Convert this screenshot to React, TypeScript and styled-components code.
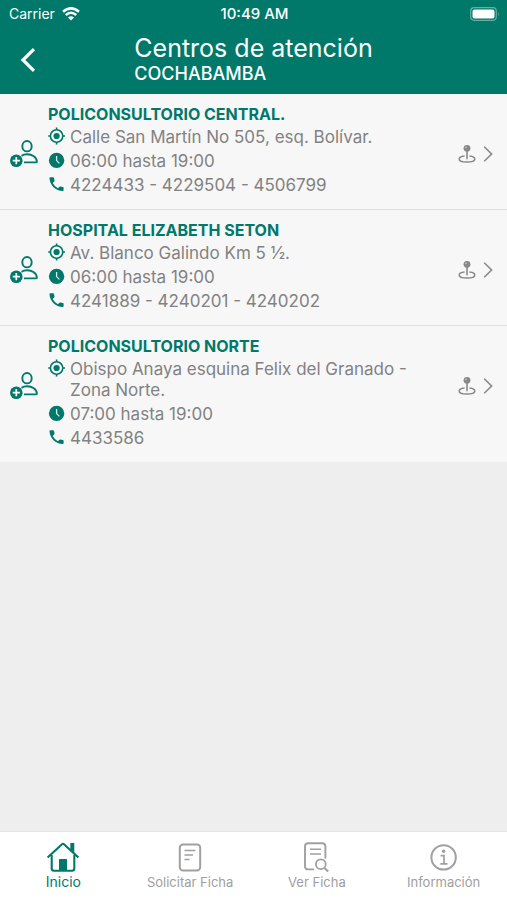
import React from "react";
import styled, { createGlobalStyle } from "styled-components";

const green = "#00796b";

const GlobalStyle = createGlobalStyle`
  * { box-sizing: border-box; }
  body { margin: 0; background: #eeeeee; font-family: Inter, "Liberation Sans", sans-serif; }
  button { font: inherit; border: 0; padding: 0; background: none; cursor: pointer; }
  h1, h2, p, ul { margin: 0; padding: 0; }
  svg { display: block; flex: none; }
`;

const Screen = styled.div`
  min-height: 100vh;
  display: flex;
  flex-direction: column;
`;

const TopArea = styled.header`
  background: ${green};
  color: #fff;
`;

const StatusBar = styled.div`
  display: grid;
  grid-template-columns: 1fr auto 1fr;
  align-items: center;
  height: 28px;
  padding: 0 7px 0 9px;
  font-size: 14px;
  line-height: 18px;
`;

const Carrier = styled.span`
  display: flex;
  align-items: center;
  gap: 7px;
`;

const Time = styled.time`
  font-size: 15px;
  font-weight: 500;
`;

const Battery = styled.span`
  justify-self: end;
`;

const NavBar = styled.div`
  display: grid;
  grid-template-columns: 1fr auto 1fr;
  align-items: center;
  height: 66px;
  padding-bottom: 2px;
`;

const BackButton = styled.button`
  display: flex;
  align-items: center;
  width: 56px;
  height: 48px;
  padding-left: 20px;
  color: #fff;
`;

const Title = styled.h1`
  font-size: 25px;
  line-height: 28px;
  font-weight: 400;
`;

const City = styled.p`
  font-size: 18px;
  line-height: 24px;
  font-weight: 500;
`;

const Centers = styled.ul`
  flex: 1;
  list-style: none;
`;

const CenterRow = styled.li`
  display: flex;
  align-items: flex-start;
  padding: 11px 14px 13px 10px;
  background: #f7f7f7;
  border-bottom: 1px solid #e0e0e0;
  &:last-child { border-bottom: 0; }
`;

const AddButton = styled.button`
  width: 38px;
  margin-top: 35px;
  color: ${green};
`;

const Details = styled.div`
  flex: 1;
  display: flex;
  flex-direction: column;
  gap: 3px;
  padding-right: 36px;
`;

const CenterName = styled.h2`
  font-size: 16px;
  line-height: 19px;
  font-weight: 700;
  color: ${green};
`;

const DetailLine = styled.p`
  display: flex;
  align-items: flex-start;
  gap: 4px;
  font-size: 17px;
  line-height: 21px;
  color: #828282;
  svg { color: ${green}; }
`;

const MapButton = styled.button`
  display: flex;
  align-items: center;
  gap: 7px;
  margin-top: 39px;
  color: #888;
`;

const TabBar = styled.nav`
  display: grid;
  grid-template-columns: repeat(4, 1fr);
  position: sticky;
  bottom: 0;
  height: 69px;
  background: #fff;
  border-top: 1px solid #e4e4e4;
`;

const Tab = styled.button<{ $active?: boolean }>`
  display: flex;
  flex-direction: column;
  align-items: center;
  padding-top: 9px;
  gap: 1px;
  color: ${(p) => (p.$active ? green : "#a0a0a0")};
`;

const TabLabel = styled.span<{ $active?: boolean }>`
  font-size: ${(p) => (p.$active ? 14 : 13)}px;
  line-height: 16px;
`;

const WifiIcon = () => (
  <svg width="18" height="14" viewBox="0 0 18 14" fill="none" stroke="currentColor" strokeWidth="2.5" aria-label="Wi-Fi">
    <path d="M1 4.8 Q9 -2 17 4.8" />
    <path d="M3.8 8 Q9 3.6 14.2 8" />
    <path d="M9 13.5 L6 10.4 Q9 8.2 12 10.4 Z" fill="currentColor" stroke="none" />
  </svg>
);

const BatteryIcon = () => (
  <svg width="30" height="14" viewBox="0 0 30 14" aria-label="Batería">
    <rect x=".7" y=".7" width="25.6" height="12.6" rx="3.5" fill="none" stroke="#fff" strokeOpacity=".4" strokeWidth="1.2" />
    <rect x="2.5" y="2.5" width="22" height="9" rx="2" fill="#fff" />
    <path d="M28 5 Q29.6 7 28 9 Z" fill="#fff" fillOpacity=".45" />
  </svg>
);

const BackIcon = () => (
  <svg width="16" height="24" viewBox="0 0 16 24" fill="none" stroke="currentColor" strokeWidth="3.2">
    <path d="M14 1.2 L3 12 L14 22.8" />
  </svg>
);

const AddPersonIcon = () => (
  <svg width="28" height="28" viewBox="0 0 28 28" fill="none" stroke="currentColor" strokeWidth="1.9">
    <ellipse cx="17" cy="6.2" rx="4.7" ry="5.2" />
    <path d="M11.5 15.7 C14.2 14 20 13.6 23.4 16 C25.6 17.5 26.8 19.7 26.9 21.4 Q26.9 22.4 25.8 22.4 H14" />
    <circle cx="6.3" cy="20.7" r="6.3" fill="currentColor" stroke="none" />
    <path d="M6.3 17.1 V24.3 M2.7 20.7 H9.9" stroke="#fff" strokeWidth="1.7" />
  </svg>
);

const TargetIcon = () => (
  <svg width="18" height="18" viewBox="0 0 18 18" fill="none" stroke="currentColor" strokeWidth="1.6">
    <circle cx="8.6" cy="9" r="6.2" />
    <circle cx="8.6" cy="9" r="3.1" fill="currentColor" stroke="none" />
    <path d="M8.6 .6 V3 M8.6 15 V17.4 M.2 9 H2.6 M14.6 9 H17" />
  </svg>
);

const ClockIcon = () => (
  <svg width="18" height="18" viewBox="0 0 18 18" fill="none">
    <circle cx="8.6" cy="9.4" r="7.7" fill="currentColor" />
    <path d="M8.6 5 V9.6 L11.4 12.4" stroke="#d9eeeb" strokeWidth="1.3" />
  </svg>
);

const PhoneIcon = () => (
  <svg width="18" height="18" viewBox="0 0 18 18" fill="currentColor">
    <path d="M2.4 2.2 H5.1 Q5.9 2.2 6 3 L6.5 5.6 Q6.6 6.1 6.2 6.5 L4.7 8.1 Q6.5 11.5 9.9 13.3 L11.5 11.7 Q11.9 11.3 12.4 11.4 L14.8 11.9 Q15.6 12.1 15.6 12.8 V15.3 Q15.6 16.1 14.8 16.1 C7.5 15.9 1.8 10.3 1.5 3 Q1.5 2.2 2.4 2.2 Z" />
  </svg>
);

const PinIcon = () => (
  <svg width="18" height="20" viewBox="0 0 18 20" fill="none" stroke="currentColor">
    <path d="M6.6 12 C3.5 12.3 1.2 13.4 1.2 15 C1.2 16.9 4.7 18.1 9 18.1 S16.8 16.9 16.8 15 C16.8 13.4 14.5 12.3 11.4 12" strokeWidth="1.5" />
    <path d="M9 7 V15.2" strokeWidth="1.6" />
    <circle cx="9" cy="4.3" r="3.4" fill="currentColor" stroke="none" />
    <circle cx="8" cy="3.3" r=".9" fill="#c4c4c4" stroke="none" />
  </svg>
);

const ChevronIcon = () => (
  <svg width="10" height="18" viewBox="0 0 10 18" fill="none" stroke="currentColor" strokeWidth="1.6">
    <path d="M1.2 1.8 L8.6 9 L1.2 16.2" />
  </svg>
);

const HomeIcon = () => (
  <svg width="34" height="32" viewBox="0 0 34 32" fill="none" stroke="currentColor" strokeWidth="2.1">
    <path d="M1.6 16.6 L16 3.2 Q17 2.3 18 3.2 L32.4 16.6" />
    <path d="M5.7 14 V27.6 Q5.7 29.8 7.9 29.8 H26.1 Q28.3 29.8 28.3 27.6 V14" />
    <path d="M25.3 9.5 V3 H27.3 V12" strokeWidth="2" />
    <path d="M13 30 V18.5 Q13 18 13.5 18 H20.5 Q21 18 21 18.5 V30 Z" fill="currentColor" stroke="none" />
  </svg>
);

const DocumentIcon = () => (
  <svg width="34" height="32" viewBox="0 0 34 32" fill="none" stroke="currentColor">
    <rect x="6.8" y="3.5" width="20.4" height="26" rx="3.2" strokeWidth="2" />
    <path d="M11.5 9.5 H22.5 M11.5 14 H20 M11.5 18.5 H16.5" strokeWidth="1.5" />
  </svg>
);

const SearchDocumentIcon = () => (
  <svg width="34" height="32" viewBox="0 0 34 32" fill="none" stroke="currentColor">
    <path d="M14 28.4 H8.2 Q5 28.4 5 25.2 V5.4 Q5 2.2 8.2 2.2 H22.2 Q25.4 2.2 25.4 5.4 V17.5" strokeWidth="1.9" />
    <path d="M10 8.2 H21 M10 13 H21" strokeWidth="1.5" />
    <circle cx="20.8" cy="23.2" r="4.9" strokeWidth="1.8" />
    <path d="M24.2 26.8 L28.2 30.6" strokeWidth="2.1" />
  </svg>
);

const InfoIcon = () => (
  <svg width="34" height="32" viewBox="0 0 34 32" fill="none" stroke="currentColor">
    <circle cx="16.6" cy="16.4" r="12.2" strokeWidth="2" />
    <circle cx="16.6" cy="10.3" r="1.7" fill="currentColor" stroke="none" />
    <path d="M13.6 14.6 H17 V22.6 M13.3 22.8 H20.5" strokeWidth="1.7" />
  </svg>
);

const centers = [
  { name: "POLICONSULTORIO CENTRAL.", address: "Calle San Martín No 505, esq. Bolívar.", hours: "06:00 hasta 19:00", phone: "4224433 - 4229504 - 4506799" },
  { name: "HOSPITAL ELIZABETH SETON", address: "Av. Blanco Galindo Km 5 ½.", hours: "06:00 hasta 19:00", phone: "4241889 - 4240201 - 4240202" },
  { name: "POLICONSULTORIO NORTE", address: "Obispo Anaya esquina Felix del Granado - Zona Norte.", hours: "07:00 hasta 19:00", phone: "4433586" },
];

const tabs = [
  { label: "Inicio", Icon: HomeIcon, active: true },
  { label: "Solicitar Ficha", Icon: DocumentIcon },
  { label: "Ver Ficha", Icon: SearchDocumentIcon },
  { label: "Información", Icon: InfoIcon },
];

export default function App() {
  return (
    <Screen>
      <GlobalStyle />
      <TopArea>
        <StatusBar>
          <Carrier>Carrier <WifiIcon /></Carrier>
          <Time>10:49 AM</Time>
          <Battery><BatteryIcon /></Battery>
        </StatusBar>
        <NavBar>
          <BackButton aria-label="Volver"><BackIcon /></BackButton>
          <div>
            <Title>Centros de atención</Title>
            <City>COCHABAMBA</City>
          </div>
        </NavBar>
      </TopArea>
      <Centers>
        {centers.map((c) => (
          <CenterRow key={c.name}>
            <AddButton aria-label={`Agregar en ${c.name}`}><AddPersonIcon /></AddButton>
            <Details>
              <CenterName>{c.name}</CenterName>
              <DetailLine><TargetIcon /><span>{c.address}</span></DetailLine>
              <DetailLine><ClockIcon /><span>{c.hours}</span></DetailLine>
              <DetailLine><PhoneIcon /><span>{c.phone}</span></DetailLine>
            </Details>
            <MapButton aria-label={`Ver mapa de ${c.name}`}><PinIcon /><ChevronIcon /></MapButton>
          </CenterRow>
        ))}
      </Centers>
      <TabBar>
        {tabs.map(({ label, Icon, active }) => (
          <Tab key={label} $active={active} aria-current={active ? "page" : undefined}>
            <Icon />
            <TabLabel $active={active}>{label}</TabLabel>
          </Tab>
        ))}
      </TabBar>
    </Screen>
  );
}
